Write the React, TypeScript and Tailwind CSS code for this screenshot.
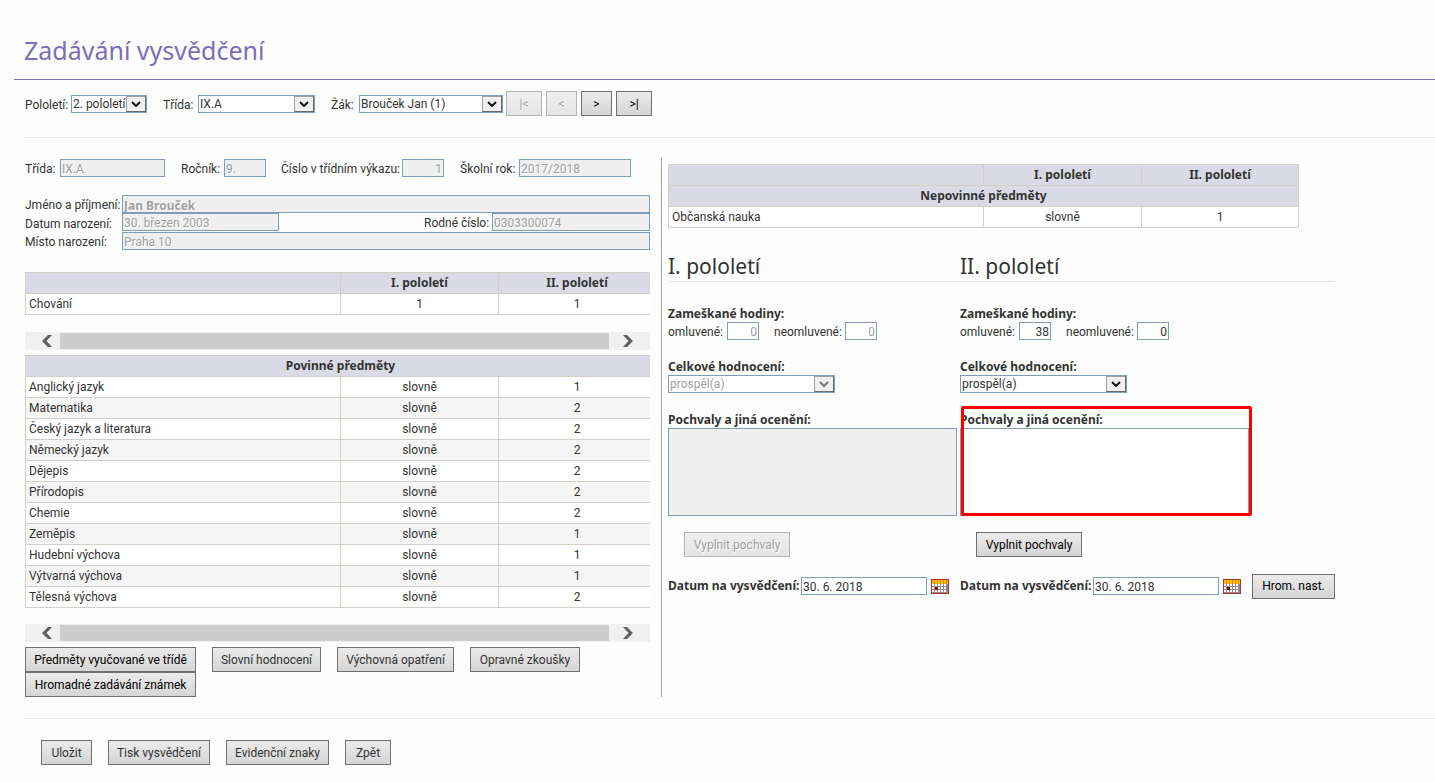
import { useState } from "react";
import type { ReactNode } from "react";
import clsx from "clsx";

const subjects = [
  ["Anglický jazyk", "slovně", "1"],
  ["Matematika", "slovně", "2"],
  ["Český jazyk a literatura", "slovně", "2"],
  ["Německý jazyk", "slovně", "2"],
  ["Dějepis", "slovně", "2"],
  ["Přírodopis", "slovně", "2"],
  ["Chemie", "slovně", "2"],
  ["Zeměpis", "slovně", "1"],
  ["Hudební výchova", "slovně", "1"],
  ["Výtvarná výchova", "slovně", "1"],
  ["Tělesná výchova", "slovně", "2"],
];

const disabledText = "text-[#a0a0a0] [text-shadow:1px_1px_0_#fff]";
const boldText = "font-['Noto_Sans',sans-serif] font-bold";

type ButtonProps = {
  children: ReactNode;
  className?: string;
  disabled?: boolean;
  strong?: boolean;
};

function Button({ children, className, disabled, strong }: ButtonProps) {
  return (
    <button
      type="button"
      disabled={disabled}
      className={clsx(
        "h-[25px] shrink-0 border bg-linear-to-b whitespace-nowrap",
        disabled
          ? "border-[#b5b5b5] from-[#efefef] to-[#e4e4e4] text-[#a0a0a0] [text-shadow:1px_1px_0_#fff]"
          : "border-[#707070] from-[#ebebeb] to-[#d5d5d5]",
        strong && "text-black",
        className
      )}
    >
      {children}
    </button>
  );
}

type LabelProps = {
  htmlFor: string;
  children: ReactNode;
  className?: string;
};

function Label({ htmlFor, children, className }: LabelProps) {
  return (
    <label htmlFor={htmlFor} className={clsx("pt-[2px] whitespace-nowrap", className)}>
      {children}
    </label>
  );
}

type SelectProps = {
  id: string;
  value: string;
  className: string;
  disabled?: boolean;
};

function Select({ id, value, className, disabled }: SelectProps) {
  return (
    <div className={clsx("relative h-[18px] shrink-0", className)}>
      <select
        id={id}
        disabled={disabled}
        className={clsx(
          "block h-full w-full appearance-none border border-[#7f9db9] bg-white pl-px leading-4 opacity-100",
          disabled && disabledText
        )}
      >
        <option>{value}</option>
      </select>
      <span className="pointer-events-none absolute top-px right-px bottom-px flex w-5 items-center justify-center border border-t-[#a0a0a0] border-r-[#696969] border-b-[#696969] border-l-[#a0a0a0] bg-[#f0f0f0]">
        <svg width="10" height="6" viewBox="0 0 10 6" fill="none">
          <path d="M1 1l4 4 4-4" stroke={disabled ? "#777" : "#111"} strokeWidth="2" />
        </svg>
      </span>
    </div>
  );
}

type FieldProps = {
  id: string;
  value: string;
  className?: string;
  disabled?: boolean;
  filled?: boolean;
};

function Field({ id, value, className, disabled, filled }: FieldProps) {
  const [text, setText] = useState(value);

  return (
    <input
      id={id}
      type="text"
      value={text}
      disabled={disabled}
      onChange={(event) => setText(event.target.value)}
      className={clsx(
        "block h-[18px] min-w-0 shrink-0 border border-[#7f9db9] px-px pt-[2px] leading-4",
        filled ? "bg-[#efefef]" : "bg-white",
        disabled && disabledText,
        className
      )}
    />
  );
}

const cell = "h-[21px] border border-[#d4d0c8] px-[3px] py-0 leading-5";

function HeadRow() {
  return (
    <tr className="bg-[#dadae6]">
      <th className={cell} />
      <th className={clsx(cell, boldText)}>I. pololetí</th>
      <th className={clsx(cell, boldText)}>II. pololetí</th>
    </tr>
  );
}

function GradeTable({ head, title, rows }: { head?: boolean; title?: string; rows: string[][] }) {
  return (
    <table className="w-[631px] table-fixed border-collapse text-center">
      <colgroup>
        <col className="w-[315px]" />
        <col className="w-[158px]" />
        <col />
      </colgroup>
      <thead>
        {head && <HeadRow />}
        {title && (
          <tr className="bg-[#dadae6]">
            <th colSpan={3} className={clsx(cell, boldText)}>
              {title}
            </th>
          </tr>
        )}
      </thead>
      <tbody>
        {rows.map(([name, first, second]) => (
          <tr key={name} className="bg-white even:bg-[#f5f5f5]">
            <td className={clsx(cell, "text-left")}>{name}</td>
            <td className={cell}>{first}</td>
            <td className={cell}>{second}</td>
          </tr>
        ))}
      </tbody>
    </table>
  );
}

function Scrollbar() {
  return (
    <div className="flex h-[18px] items-center bg-[#f0f0f0]">
      <button type="button" aria-label="Posunout vlevo" className="flex w-[35px] justify-end pr-2">
        <svg width="10" height="12" viewBox="0 0 10 12">
          <path d="M6 0h4L4.5 6 10 12H6L0 6z" fill="#606060" />
        </svg>
      </button>
      <div className="h-4 flex-1 bg-[#cdcdcd]" />
      <button type="button" aria-label="Posunout vpravo" className="flex w-[41px] pl-[14px]">
        <svg width="10" height="12" viewBox="0 0 10 12">
          <path d="M4 0H0l5.5 6L0 12h4l6-6z" fill="#606060" />
        </svg>
      </button>
    </div>
  );
}

function CalendarIcon() {
  return (
    <svg width="18" height="15" viewBox="0 0 18 15" shapeRendering="crispEdges">
      <rect width="18" height="15" fill="#b5312c" />
      <rect x="1" y="1" width="16" height="4" fill="#ffc000" />
      <rect x="1" y="5" width="16" height="9" fill="#8c8c8c" />
      {[5, 8, 11].map((y) =>
        [1, 4, 7, 10, 13].map((x) => (
          <rect key={`${x}-${y}`} x={x} y={y} width="2" height="2" fill="#fff" />
        ))
      )}
      <path d="M3 1h1v4H3zM6 1h1v4H6zM9 1h1v4H9zM12 1h1v4h-1zM15 1h1v4h-1z" fill="#d98a1c" />
      <rect x="4" y="8" width="3" height="3" fill="#a00000" />
      <path d="M0 0h18v15H0zM1 1v13h16V1z" fill="#b5312c" fillRule="evenodd" />
    </svg>
  );
}

type TermProps = {
  id: string;
  title: string;
  excused: string;
  disabled?: boolean;
  highlighted?: boolean;
  children?: ReactNode;
};

function Term({ id, title, excused, disabled, highlighted, children }: TermProps) {
  return (
    <section className={disabled ? "w-[292px]" : "w-[375px]"}>
      <h2 className="h-[31px] border-b border-[#e2e2e2] font-['Noto_Sans',sans-serif] text-[21px] leading-[30px]">
        {title}
      </h2>

      <h3 className={clsx("mt-6 h-4 leading-4", boldText)}>Zameškané hodiny:</h3>
      <div className="flex items-center">
        <Label htmlFor={`${id}-excused`} className="w-[59px]">
          omluvené:
        </Label>
        <Field id={`${id}-excused`} value={excused} disabled={disabled} className="w-8 text-right" />
        <Label htmlFor={`${id}-unexcused`} className="ml-[15px] w-[71px]">
          neomluvené:
        </Label>
        <Field id={`${id}-unexcused`} value="0" disabled={disabled} className="w-8 text-right" />
      </div>

      <label htmlFor={`${id}-result`} className={clsx("mt-[19px] block h-4 leading-4", boldText)}>
        Celkové hodnocení:
      </label>
      <Select id={`${id}-result`} value="prospěl(a)" disabled={disabled} className="w-[167px]" />

      <div className="relative mt-[19px]">
        <label htmlFor={`${id}-praise`} className={clsx("block h-4 leading-4", boldText)}>
          Pochvaly a jiná ocenění:
        </label>
        <textarea
          id={`${id}-praise`}
          disabled={disabled}
          className={clsx(
            "block h-[88px] w-[289px] resize-none border border-[#7f9db9]",
            disabled ? "bg-[#efefef]" : "bg-white"
          )}
        />
        {highlighted && (
          <div className="pointer-events-none absolute -top-[6px] bottom-0 left-px w-[291px] rounded-xs border-3 border-[#ff0000]" />
        )}
      </div>

      <Button disabled={disabled} strong={!disabled} className="mt-4 ml-4 block w-[106px]">
        Vyplnit pochvaly
      </Button>

      <div className="mt-4 flex h-[26px] items-center">
        <label htmlFor={`${id}-date`} className={clsx("w-[133px] whitespace-nowrap", boldText)}>
          Datum na vysvědčení:
        </label>
        <Field id={`${id}-date`} value="30. 6. 2018" className="w-[126px]" />
        <button type="button" aria-label="Kalendář" className="ml-1">
          <CalendarIcon />
        </button>
        {children}
      </div>
    </section>
  );
}

function App() {
  return (
    <main className="min-h-screen bg-[#fdfdfd] pl-[14px] font-['Roboto',sans-serif] text-[12px] leading-4 text-[#333]">
      <h1 className="border-b border-[#7b6fb0] pt-[30px] pb-[9px] pl-[10px] font-['Noto_Sans',sans-serif] text-[25px] leading-10 text-[#7b6fb5]">
        Zadávání vysvědčení
      </h1>

      <div className="pl-[11px]">
        <form className="flex h-[58px] items-center border-b border-[#ebebeb] pb-[10px]">
          <Label htmlFor="term" className="w-[46px]">
            Pololetí:
          </Label>
          <Select id="term" value="2. pololetí" className="w-[76px]" />
          <Label htmlFor="class" className="ml-4 w-[35px]">
            Třída:
          </Label>
          <Select id="class" value="IX.A" className="w-[117px]" />
          <Label htmlFor="student" className="ml-4 w-7">
            Žák:
          </Label>
          <Select id="student" value="Brouček Jan (1)" className="w-[144px]" />
          <div className="ml-[3px] flex gap-1">
            <Button disabled className="w-9">
              |&lt;
            </Button>
            <Button disabled className="w-[31px]">
              &lt;
            </Button>
            <Button strong className="w-[31px]">
              &gt;
            </Button>
            <Button strong className="w-9">
              &gt;|
            </Button>
          </div>
        </form>

        <div className="mt-5 flex border-b border-[#ebebeb] pb-[21px]">
          <div className="w-[637px] shrink-0 border-r border-[#a0a0a0] pt-px pr-[11px]">
            <div className="flex items-center">
              <Label htmlFor="info-class" className="w-[35px]">
                Třída:
              </Label>
              <Field id="info-class" value="IX.A" disabled filled className="w-[105px]" />
              <Label htmlFor="grade" className="ml-4 w-[43px]">
                Ročník:
              </Label>
              <Field id="grade" value="9." disabled filled className="w-[42px]" />
              <Label htmlFor="number" className="ml-[15px] w-[121px]">
                Číslo v třídním výkazu:
              </Label>
              <Field id="number" value="1" disabled filled className="w-[42px] text-right" />
              <Label htmlFor="year" className="ml-4 w-[59px]">
                Školní rok:
              </Label>
              <Field id="year" value="2017/2018" disabled filled className="w-28" />
            </div>

            <div className="mt-[18px] grid grid-cols-[97px_1fr] items-center">
              <Label htmlFor="name">Jméno a příjmení:</Label>
              <Field id="name" value="Jan Brouček" disabled filled className={clsx("w-full", boldText)} />
              <Label htmlFor="birth-date">Datum narození:</Label>
              <div className="flex h-[19px]">
                <Field id="birth-date" value="30. březen 2003" disabled filled className="w-[157px]" />
                <Label htmlFor="birth-number" className="ml-auto w-[68px]">
                  Rodné číslo:
                </Label>
                <Field id="birth-number" value="0303300074" disabled filled className="w-[158px]" />
              </div>
              <Label htmlFor="birth-place">Místo narození:</Label>
              <Field id="birth-place" value="Praha 10" disabled filled className="w-full" />
            </div>

            <div className="mt-[22px] overflow-hidden">
              <GradeTable head rows={[["Chování", "1", "1"]]} />
            </div>
            <div className="mt-[17px] mb-[5px]">
              <Scrollbar />
            </div>
            <div className="overflow-hidden">
              <GradeTable title="Povinné předměty" rows={subjects} />
            </div>
            <div className="mt-4 mb-[5px]">
              <Scrollbar />
            </div>

            <div className="flex flex-wrap gap-x-4">
              <Button strong className="w-[171px]">
                Předměty vyučované ve třídě
              </Button>
              <Button className="w-[109px]">Slovní hodnocení</Button>
              <Button className="w-[117px]">Výchovná opatření</Button>
              <Button className="w-[110px]">Opravné zkoušky</Button>
              <Button strong className="w-[171px]">
                Hromadné zadávání známek
              </Button>
            </div>
          </div>

          <div className="pt-[6px] pl-[6px]">
            <GradeTable head title="Nepovinné předměty" rows={[["Občanská nauka", "slovně", "1"]]} />
            <div className="mt-[23px] flex">
              <Term id="first" title="I. pololetí" excused="0" disabled />
              <Term id="second" title="II. pololetí" excused="38" highlighted>
                <Button strong className="ml-auto w-[83px]">
                  Hrom. nast.
                </Button>
              </Term>
            </div>
          </div>
        </div>

        <div className="flex gap-4 pt-[21px] pb-4 pl-4">
          <Button className="w-[51px]">Uložit</Button>
          <Button className="w-[102px]">Tisk vysvědčení</Button>
          <Button className="w-[103px]">Evidenční znaky</Button>
          <Button className="w-[46px]">Zpět</Button>
        </div>
      </div>
    </main>
  );
}

export default App;
